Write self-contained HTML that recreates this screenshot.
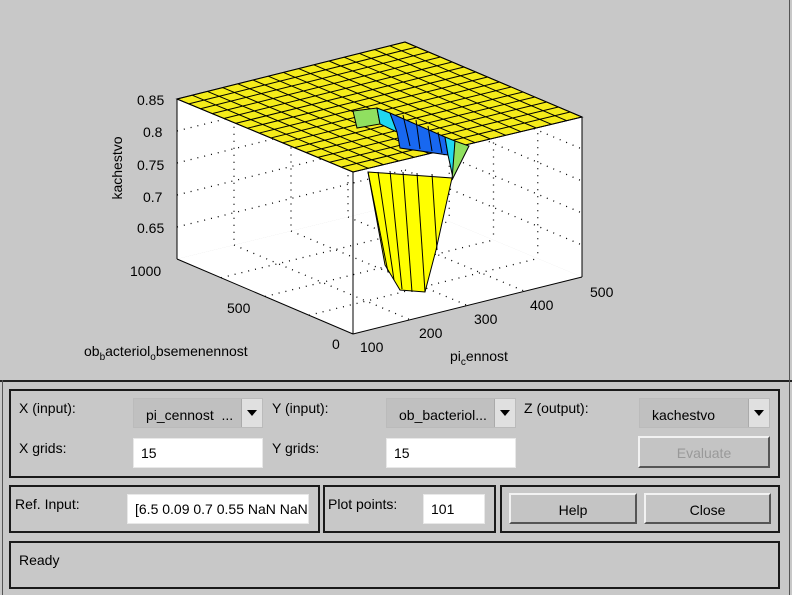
<!DOCTYPE html>
<html><head><meta charset="utf-8"><style>
body{margin:0;width:792px;height:595px;background:#c8c8c8;position:relative;overflow:hidden;font-family:"Liberation Sans",Arial,sans-serif;font-size:14px;color:#000}
.a{position:absolute}
.box{position:absolute;border:2px solid #1a1a1a;box-sizing:border-box}
.lbl{position:absolute;font-size:14px}
.in{position:absolute;background:#fff;box-sizing:border-box;padding:6px 0 0 7px;font-size:14px;border:1px solid #e8e8e8}
.dd{position:absolute;background:#c0c0c0;border:1px solid #bbb;box-sizing:border-box;padding:8px 0 0 12px}
.dd .ar{position:absolute;right:0;top:0;width:20px;height:100%;background:#e0e0e0;border-left:1px solid #aaa}
.dd .ar:after{content:"";position:absolute;left:5px;top:11px;border-left:5px solid transparent;border-right:5px solid transparent;border-top:6px solid #000}
.btn{position:absolute;background:#c4c4c4;border:2px solid;border-color:#f2f2f2 #555 #555 #f2f2f2;box-sizing:border-box;text-align:center;padding-top:7px}
</style></head><body>
<svg class="a" style="left:0;top:0" width="792" height="380" id="s">
<polygon points="177,99 405,42 405,203 177,259" fill="#fff"/>
<polygon points="405,42 582,117 582,277 405,203" fill="#fff"/>
<polygon points="177,259 405,203 582,277 353,334" fill="#fff"/>
<g id="grid" stroke="#000" stroke-width="1.3" stroke-dasharray="1,6" fill="none"></g>
<line x1="177" y1="99" x2="177" y2="259" stroke="#000"/>
<line x1="582" y1="117" x2="582" y2="277" stroke="#000"/>
<line x1="177" y1="259" x2="353" y2="334" stroke="#000"/>
<line x1="353" y1="334" x2="582" y2="277" stroke="#000"/>
<g id="surf"></g>
<line x1="353" y1="172" x2="353" y2="334" stroke="#000"/>
<g font-family="Liberation Sans" font-size="14" fill="#000">
<text x="137" y="105">0.85</text><text x="143" y="137">0.8</text><text x="137" y="170">0.75</text><text x="143" y="202">0.7</text><text x="137" y="233">0.65</text>
<text transform="translate(122,168) rotate(-90)" text-anchor="middle">kachestvo</text>
<text x="130" y="276">1000</text><text x="227" y="313">500</text><text x="332" y="349">0</text>
<text x="84" y="356">ob<tspan font-size="10" dy="4">b</tspan><tspan dy="-4">acteriol</tspan><tspan font-size="10" dy="4">o</tspan><tspan dy="-4">bsemenennost</tspan></text>
<text x="360" y="352">100</text><text x="419" y="338">200</text><text x="474" y="324">300</text><text x="530" y="310">400</text><text x="590" y="297">500</text>
<text x="450" y="361">pi<tspan font-size="10" dy="4">c</tspan><tspan dy="-4">ennost</tspan></text>
</g>
</svg>
<div class="a" style="left:0;top:380px;width:792px;height:2px;background:#222"></div>
<div class="a" style="left:789px;top:0;width:1px;height:595px;background:#555"></div>
<div class="a" style="left:2px;top:380px;width:1px;height:215px;background:#555"></div>
<div class="box" style="left:9px;top:389px;width:771px;height:89px"></div>
<div class="lbl" style="left:19px;top:400px">X (input):</div>
<div class="dd" style="left:133px;top:398px;width:130px;height:30px">pi_cennost &nbsp;...<div class="ar"></div></div>
<div class="lbl" style="left:272px;top:400px">Y (input):</div>
<div class="dd" style="left:386px;top:398px;width:130px;height:30px">ob_bacteriol...<div class="ar"></div></div>
<div class="lbl" style="left:524px;top:400px">Z (output):</div>
<div class="dd" style="left:639px;top:398px;width:131px;height:30px">kachestvo<div class="ar"></div></div>
<div class="lbl" style="left:19px;top:440px">X grids:</div>
<div class="in" style="left:133px;top:438px;width:130px;height:30px">15</div>
<div class="lbl" style="left:272px;top:440px">Y grids:</div>
<div class="in" style="left:386px;top:438px;width:130px;height:30px">15</div>
<div class="btn" style="left:638px;top:436px;width:132px;height:32px;color:#999">Evaluate</div>
<div class="box" style="left:9px;top:485px;width:311px;height:48px"></div>
<div class="lbl" style="left:15px;top:496px">Ref. Input:</div>
<div class="in" style="left:127px;top:494px;width:182px;height:30px;white-space:nowrap;overflow:hidden">[6.5 0.09 0.7 0.55 NaN NaN</div>
<div class="box" style="left:323px;top:485px;width:173px;height:48px"></div>
<div class="lbl" style="left:328px;top:496px">Plot points:</div>
<div class="in" style="left:423px;top:494px;width:62px;height:30px">101</div>
<div class="box" style="left:500px;top:485px;width:280px;height:48px"></div>
<div class="btn" style="left:509px;top:493px;width:128px;height:31px">Help</div>
<div class="btn" style="left:644px;top:493px;width:127px;height:31px">Close</div>
<div class="box" style="left:9px;top:541px;width:771px;height:48px"></div>
<div class="lbl" style="left:19px;top:552px">Ready</div>
<script>
var NS="http://www.w3.org/2000/svg";
function P(u,v,A,B,C,D){return [A[0]*(1-u)*(1-v)+B[0]*u*(1-v)+C[0]*u*v+D[0]*(1-u)*v, A[1]*(1-u)*(1-v)+B[1]*u*(1-v)+C[1]*u*v+D[1]*(1-u)*v];}
function el(t,a,p){var e=document.createElementNS(NS,t);for(var k in a)e.setAttribute(k,a[k]);p.appendChild(e);return e;}
var g=document.getElementById('grid');
for(var i=1;i<5;i++){var y=99+i*32;el('line',{x1:177,y1:y,x2:405,y2:y-57},g);el('line',{x1:405,y1:y-57,x2:582,y2:y+18},g);}
for(var i=1;i<4;i++){var t=i/4;el('line',{x1:177+228*t,y1:99-57*t,x2:177+228*t,y2:259-56*t},g);el('line',{x1:405+177*t,y1:42+75*t,x2:405+177*t,y2:203+74*t},g);
el('line',{x1:177+176*t,y1:259+75*t,x2:405+177*t,y2:203+74*t},g);el('line',{x1:177+228*t,y1:259-56*t,x2:353+229*t,y2:334-57*t},g);}
var s=document.getElementById('surf');
var A=[177,99],B=[405,42],C=[582,117],D=[353,172];
el('polygon',{points:"177,99 405,42 582,117 353,172",fill:"#f5ec1a",stroke:"#000","stroke-width":1},s);
for(var i=0;i<=15;i++){var t=i/15,a=P(t,0,A,B,C,D),b=P(t,1,A,B,C,D),c=P(0,t,A,B,C,D),d=P(1,t,A,B,C,D);
el('line',{x1:a[0],y1:a[1],x2:b[0],y2:b[1],stroke:"#000","stroke-width":1},s);
el('line',{x1:c[0],y1:c[1],x2:d[0],y2:d[1],stroke:"#000","stroke-width":1},s);}
el('polygon',{points:"368,172 452,178 436,250 425,292 400,290 385,265",fill:"#ffff00",stroke:"#000","stroke-width":1},s);
var xs=[[368,172,388,272],[378,172,394,280],[390,171,402,289],[403,172,412,292],[417,173,425,292],[432,174,437,250]];
xs.forEach(function(l){el('line',{x1:l[0],y1:l[1],x2:l[2],y2:l[3],stroke:"#000"},s);});
el('polygon',{points:"353,111 377,108 380,124 357,128",fill:"#90e060",stroke:"#000"},s);
el('polygon',{points:"377,108 390,113 397,132 380,124",fill:"#20d8f0",stroke:"#000"},s);
el('polygon',{points:"390,113 445,137 448,155 400,148 397,132",fill:"#1868f0",stroke:"#000"},s);
el('polygon',{points:"445,137 455,141 453,178 448,155",fill:"#20d8f0",stroke:"#000"},s);
el('polygon',{points:"455,141 469,146 452,180",fill:"#90e060",stroke:"#000"},s);
[[403,115,410,146],[416,120,420,149],[428,126,432,151],[438,132,442,153]].forEach(function(l){el('line',{x1:l[0],y1:l[1],x2:l[2],y2:l[3],stroke:"#000"},s);});
</script>
</body></html>
